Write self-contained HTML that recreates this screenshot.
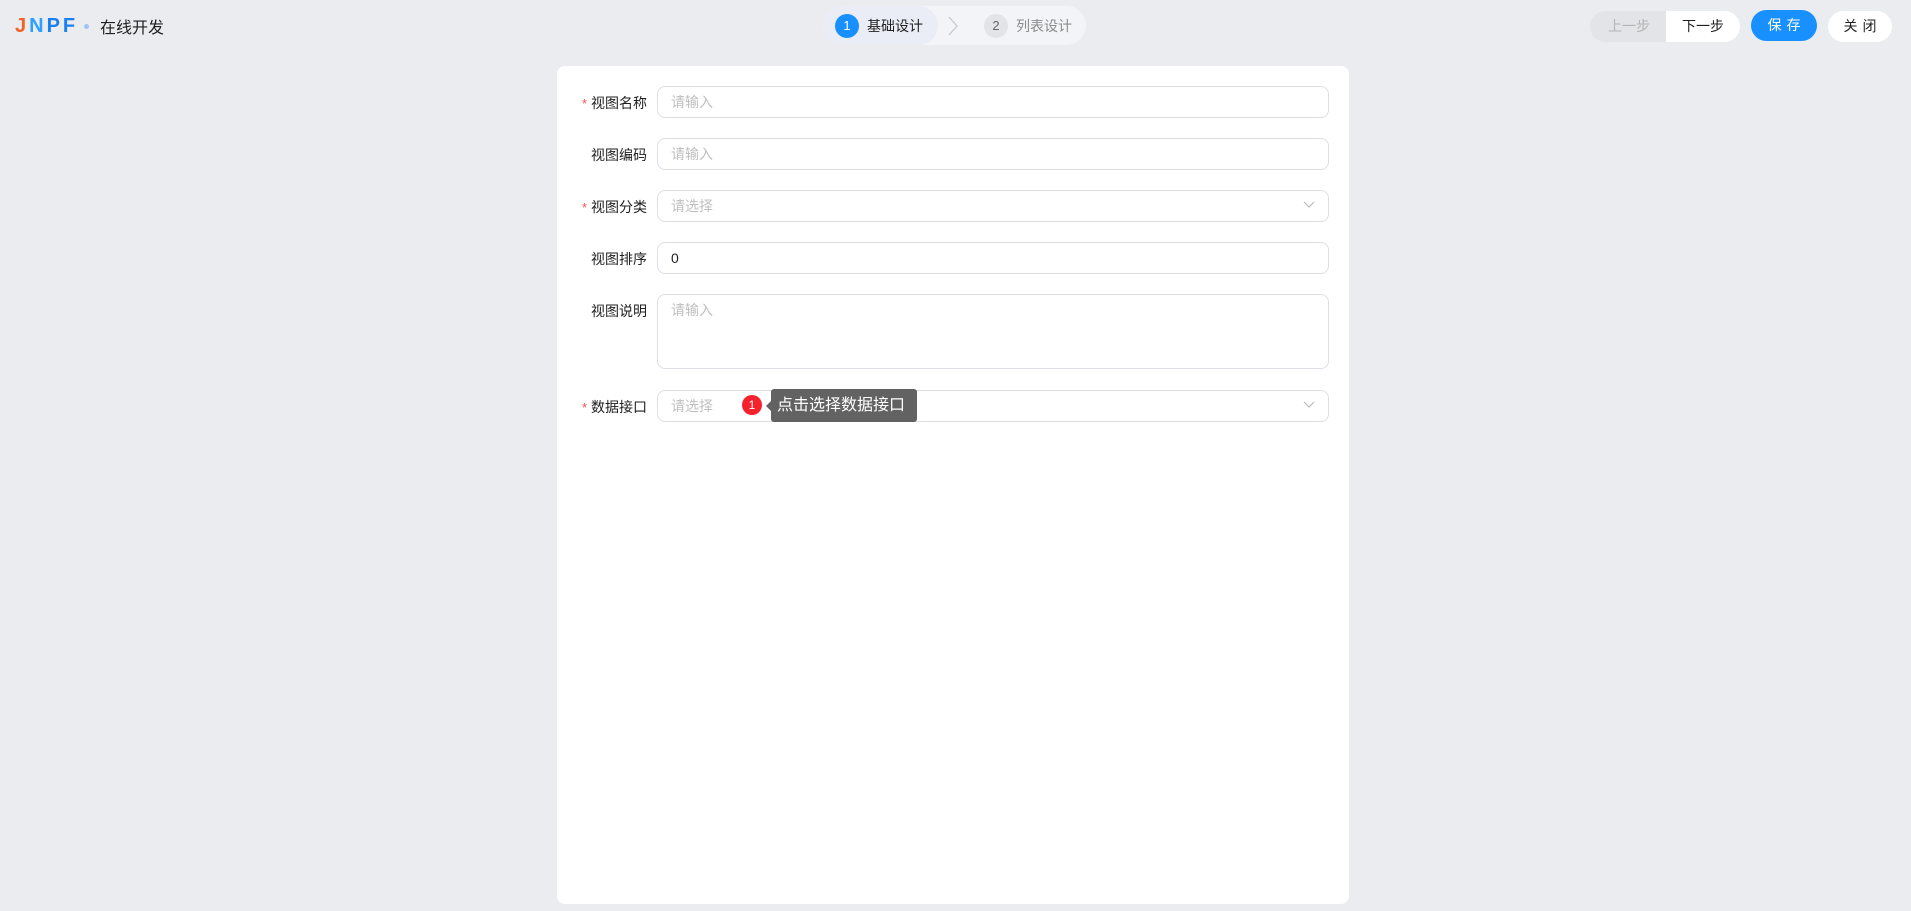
<!DOCTYPE html>
<html><head><meta charset="utf-8"><style>
*{box-sizing:border-box;margin:0;padding:0}
body{width:1911px;height:911px;background:#ebecf0;font-family:"Liberation Sans","Noto Sans CJK SC",sans-serif;position:relative;overflow:hidden;color:#1f1f1f}
.abs{position:absolute}
.logo{left:15px;top:15px;font-size:20px;font-weight:bold;letter-spacing:3px;font-family:"Liberation Sans",sans-serif}
.steps{left:823px;top:6px;width:263px;height:39px;border-radius:20px;background:#f3f4f7}
.step1{left:823px;top:6px;width:115px;height:39px;border-radius:20px;background:#eaedf5}
.circ{width:24px;height:24px;border-radius:50%;font-size:13px;text-align:center;line-height:24px}
.btn{height:31px;border-radius:16px;font-size:14px;text-align:center;line-height:31px}
.card{left:557px;top:66px;width:792px;height:838px;background:#fff;border-radius:8px}
.lab{position:absolute;right:1264px;font-size:14px;color:#1f1f1f;text-align:right;white-space:nowrap}
.lab .r{color:#ff4d4f;margin-right:4px;font-size:13px}
.inp{position:absolute;left:657px;width:672px;height:32px;border:1px solid #dcdfe6;border-radius:8px;font-size:14px;color:#bfbfbf;padding-left:13px;line-height:30px}
.chev{position:absolute;right:13px;top:10px}
</style></head><body>
<div class="abs logo"><span style="color:#f2652a">J</span><span style="color:#2ca0ff">N</span><span style="color:#1a7ff0">PF</span></div>
<div class="abs" style="left:84px;top:24px;width:5px;height:5px;border-radius:50%;background:#9ec4f8"></div>
<div class="abs" style="left:100px;top:14px;font-size:16px">在线开发</div>

<div class="abs steps"></div>
<div class="abs step1"></div>
<div class="abs circ" style="left:835px;top:14px;background:#1890ff;color:#fff">1</div>
<div class="abs" style="left:867px;top:16px;font-size:14px;color:#1f1f1f">基础设计</div>
<svg class="abs" style="left:946px;top:15px" width="14" height="22"><path d="M3 2 L11 11 L3 20" fill="none" stroke="#c6c8cc" stroke-width="1.3"/></svg>
<div class="abs circ" style="left:984px;top:14px;background:#e3e4e8;color:#666">2</div>
<div class="abs" style="left:1016px;top:16px;font-size:14px;color:#8c8c8c">列表设计</div>

<div class="abs btn" style="left:1590px;top:11px;width:78px;background:#e3e4e8;color:#b5b5b5;border-radius:16px 0 0 16px">上一步</div>
<div class="abs btn" style="left:1666px;top:11px;width:74px;background:#fff;color:#1f1f1f;border-radius:0 16px 16px 0">下一步</div>
<div class="abs btn" style="left:1751px;top:10px;width:66px;background:#1890ff;color:#fff;letter-spacing:5px;padding-left:5px">保存</div>
<div class="abs btn" style="left:1828px;top:11px;width:64px;background:#fff;color:#1f1f1f;letter-spacing:5px;padding-left:5px">关闭</div>

<div class="abs card"></div>

<div class="lab" style="top:93px"><span class="r">*</span>视图名称</div>
<div class="inp" style="top:86px">请输入</div>
<div class="lab" style="top:145px">视图编码</div>
<div class="inp" style="top:138px">请输入</div>
<div class="lab" style="top:197px"><span class="r">*</span>视图分类</div>
<div class="inp" style="top:190px">请选择<svg class="chev" width="12" height="8"><path d="M1 1 L6 6 L11 1" fill="none" stroke="#bbb" stroke-width="1.2"/></svg></div>
<div class="lab" style="top:249px">视图排序</div>
<div class="inp" style="top:242px;color:#1f1f1f">0</div>
<div class="lab" style="top:301px">视图说明</div>
<div class="inp" style="top:294px;height:75px">请输入</div>
<div class="lab" style="top:397px"><span class="r">*</span>数据接口</div>
<div class="inp" style="top:390px">请选择<svg class="chev" width="12" height="8"><path d="M1 1 L6 6 L11 1" fill="none" stroke="#bbb" stroke-width="1.2"/></svg></div>

<div class="abs" style="left:742px;top:395px;width:20px;height:20px;border-radius:50%;background:#f5222d;color:#fff;font-size:12px;text-align:center;line-height:20px">1</div>
<div class="abs" style="left:766px;top:401px;width:0;height:0;border-top:5px solid transparent;border-bottom:5px solid transparent;border-right:5px solid #626262"></div>
<div class="abs" style="left:771px;top:389px;width:146px;height:33px;background:#626262;border-radius:3px;color:#fff;font-size:16px;line-height:33px;padding-left:6px;white-space:nowrap">点击选择数据接口</div>
</body></html>
